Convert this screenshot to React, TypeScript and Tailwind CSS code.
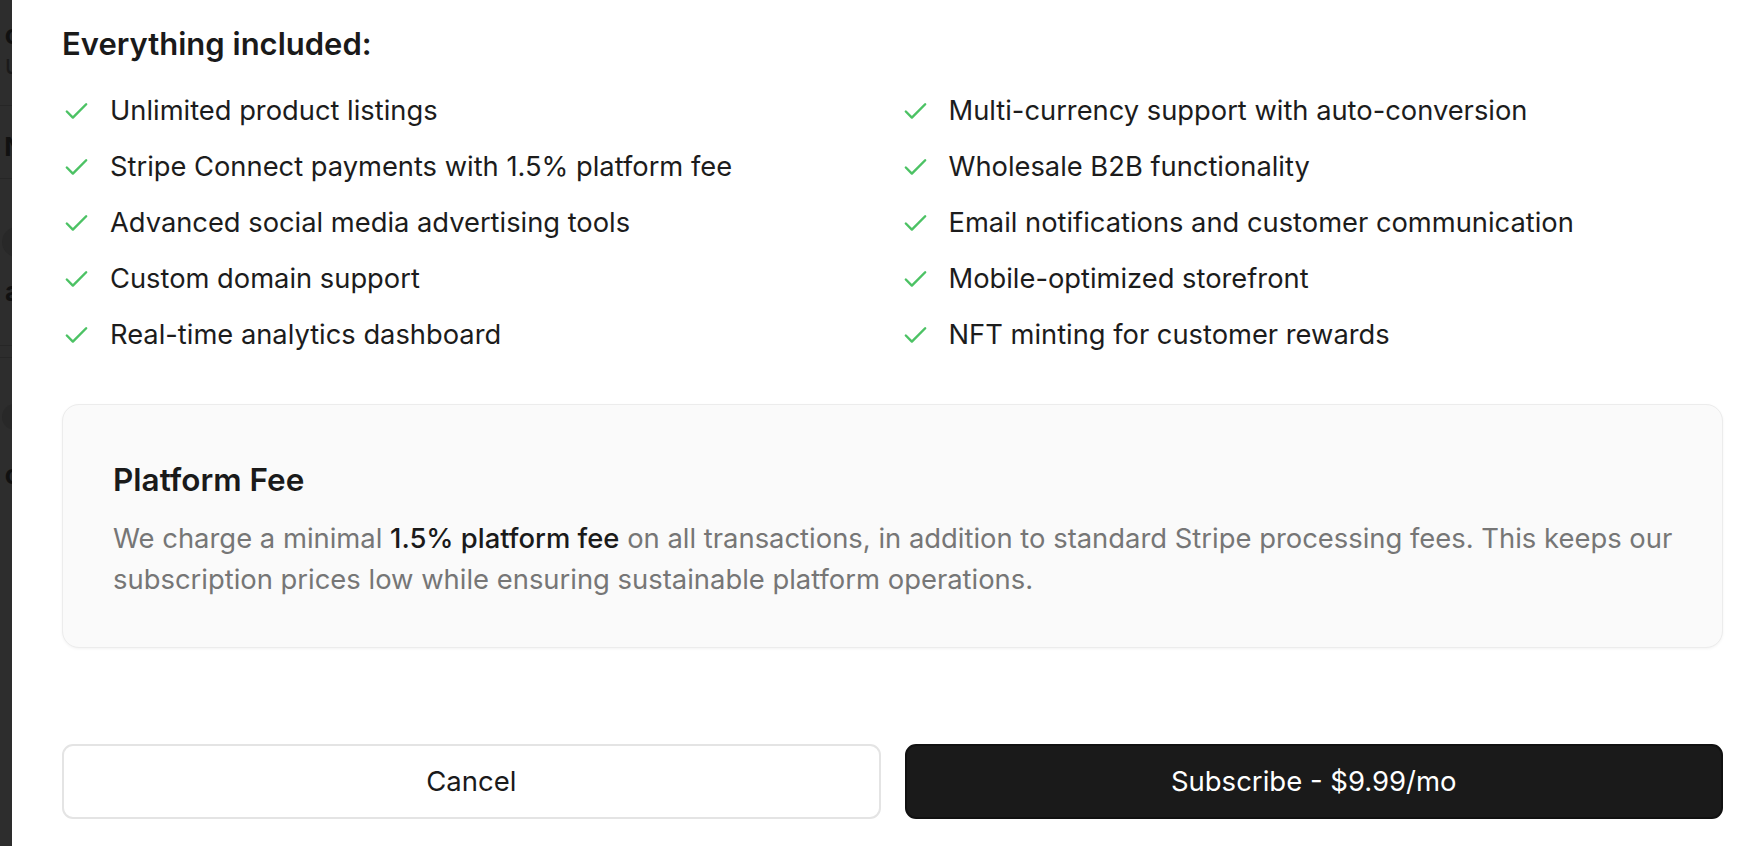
import { Check } from 'lucide-react'

const leftFeatures = [
  'Unlimited product listings',
  'Stripe Connect payments with 1.5% platform fee',
  'Advanced social media advertising tools',
  'Custom domain support',
  'Real-time analytics dashboard',
]

const rightFeatures = [
  'Multi-currency support with auto-conversion',
  'Wholesale B2B functionality',
  'Email notifications and customer communication',
  'Mobile-optimized storefront',
  'NFT minting for customer rewards',
]

const FeatureItem = ({ label }: { label: string }) => (
  <li className="flex items-center h-[56px]">
    <Check className="w-[29px] h-[29px] text-[#4cc264] shrink-0" strokeWidth={2} />
    <span className="ml-[19px] text-[27.3px] leading-[40px] text-[#1c1c1c]">{label}</span>
  </li>
)

// glimpse of the page behind the dialog
const BackdropStrip = () => (
  <div className="w-[12px] shrink-0 bg-[#2d2d2d] overflow-hidden flex flex-col items-end text-[#111] font-bold text-[26px] leading-[30px]">
    <div className="h-[20px]" />
    <div className="mr-[-8px]">c</div>
    <div className="mr-[-8px] font-normal text-[#1a1a1a]">u</div>
    <div className="h-[25px]" />
    <div className="w-full h-px bg-[#262626]" />
    <div className="h-[26px]" />
    <div className="mr-[-12px]">N</div>
    <div className="h-[16px]" />
    <div className="w-full h-px bg-[#262626]" />
    <div className="h-[48px]" />
    <div className="w-[30px] h-[30px] rounded-full bg-[#282828] mr-[-20px]" />
    <div className="h-[20px]" />
    <div className="mr-[-8px]">a</div>
    <div className="h-[38px]" />
    <div className="w-full h-px bg-[#262626]" />
    <div className="h-[11px]" />
    <div className="w-full h-px bg-[#262626]" />
    <div className="h-[46px]" />
    <div className="w-[26px] h-[26px] rounded-full bg-[#282828] mr-[-16px]" />
    <div className="h-[30px]" />
    <div className="mr-[-8px]">c</div>
  </div>
)

export default function App() {
  return (
    <div
      className="flex w-[1750px] h-[846px] overflow-hidden bg-white"
      style={{ fontFamily: 'Inter, "Noto Sans", sans-serif' }}
    >
      <BackdropStrip />
      <div className="flex-1 bg-white pl-[50px] pr-[27px] pt-[26px]">
        <h3 className="text-[31px] leading-[36px] font-semibold text-[#1a1a1a]">
          Everything included:
        </h3>

        <div className="grid grid-cols-2 gap-x-[16px] mt-[21px]">
          <ul className="flex flex-col">
            {leftFeatures.map((f) => (
              <FeatureItem key={f} label={f} />
            ))}
          </ul>
          <ul className="flex flex-col">
            {rightFeatures.map((f) => (
              <FeatureItem key={f} label={f} />
            ))}
          </ul>
        </div>

        <div className="mt-[41px] rounded-[17px] border border-[#ececec] bg-[#fafafa] shadow-[0_1px_3px_rgba(0,0,0,0.05)] pl-[50px] pr-[30px] pt-[57px] pb-[47px]">
          <h4 className="text-[31.5px] leading-[36px] font-semibold text-[#1a1a1a]">Platform Fee</h4>
          <p className="mt-[20px] text-[27.4px] leading-[41px] text-[#767676]">
            We charge a minimal <span className="font-medium text-[#1a1a1a]">1.5% platform fee</span> on all
            transactions, in addition to standard Stripe processing fees. This keeps our subscription prices
            low while ensuring sustainable platform operations.
          </p>
        </div>

        <div className="grid grid-cols-2 gap-[24px] mt-[96px]">
          <button className="h-[75px] rounded-[11px] border-2 border-[#e4e4e4] bg-white text-[27.5px] text-[#1a1a1a]">
            Cancel
          </button>
          <button className="h-[75px] rounded-[11px] bg-[#1a1a1a] border-2 border-[#111] text-[27.5px] text-white">
            Subscribe - $9.99/mo
          </button>
        </div>
      </div>
    </div>
  )
}
